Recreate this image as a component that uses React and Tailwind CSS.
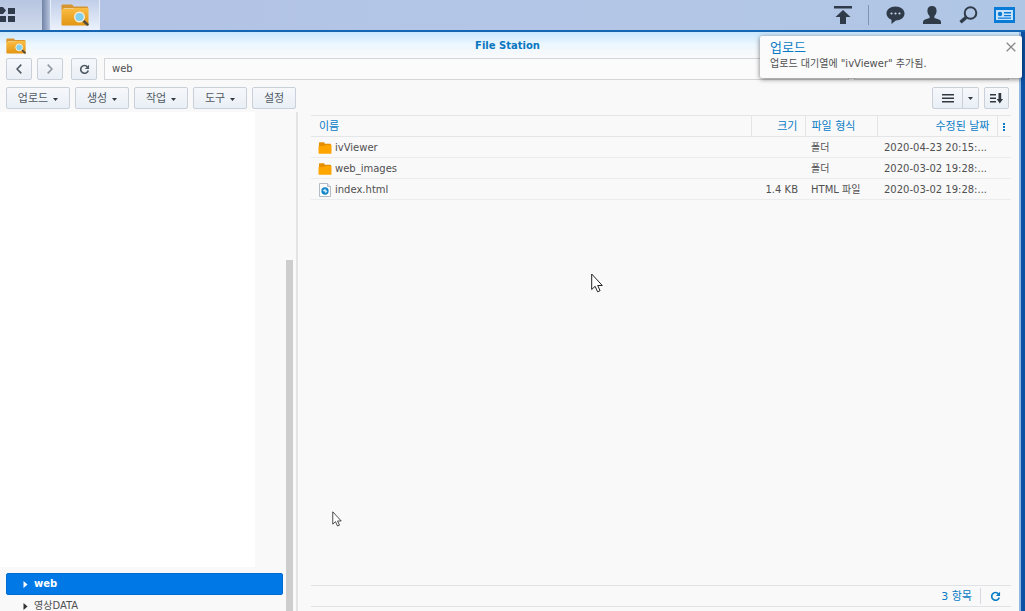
import React from "react";

const files = [
  { name: "ivViewer", kind: "folder", size: "", type: "폴더", date: "2020-04-23 20:15:..." },
  { name: "web_images", kind: "folder", size: "", type: "폴더", date: "2020-03-02 19:28:..." },
  { name: "index.html", kind: "html", size: "1.4 KB", type: "HTML 파일", date: "2020-03-02 19:28:..." },
];

const menus = [
  { label: "업로드", width: "w-16" },
  { label: "생성", width: "w-[54px]" },
  { label: "작업", width: "w-[54px]" },
  { label: "도구", width: "w-[54px]" },
];

const buttonStyle =
  "flex h-[22px] shrink-0 items-center justify-center rounded-[2px] border border-[#c9d0d9] bg-linear-to-b from-[#f6f8fb] to-[#e9eff6] text-[#505a64]";

function StationIcon({ className }) {
  return (
    <svg className={className} viewBox="0 0 28 22" aria-hidden="true">
      <defs>
        <linearGradient id="folderFace" x1="0" y1="0" x2="0" y2="1">
          <stop offset="0" stopColor="#fbbd45" />
          <stop offset="1" stopColor="#e29512" />
        </linearGradient>
      </defs>
      <path d="M.5 3V1.500Q.5.500 1.500.500h9q1 0 1.500 1l.5 1h13.500q1 0 1 1v3H.5z" fill="#d79530" />
      <path d="M2.500 4h23v3h-23z" fill="#efcf90" />
      <path d="M.5 5h11l2-1h14v16.500q0 1-1 1h-25q-1 0-1-1z" fill="url(#folderFace)" />
      <path d="M22 16.500l4.500 4" stroke="#514a3d" strokeWidth="2.500" strokeLinecap="round" />
      <circle cx="18.500" cy="13" r="4.800" fill="#83cfee" stroke="#f3edda" strokeWidth="1.400" />
    </svg>
  );
}

function FolderIcon() {
  return (
    <svg className="h-3 w-[14px] shrink-0" viewBox="0 0 14 12" aria-hidden="true">
      <path d="M1 3V1q0-.7.7-.7H6l1 1.400h5.300q.7 0 .7.700V4H1z" fill="#e48e00" />
      <path d="M.5 4h5.700l1-.9h6.300V11q0 .7-.7.700H1.200Q.5 11.700.5 11z" fill="#ffa500" />
    </svg>
  );
}

function HtmlIcon() {
  return (
    <svg className="h-[14px] w-[14px] shrink-0" viewBox="0 0 14 14" aria-hidden="true">
      <path d="M1.500.5h8l3 3v10h-11z" fill="#fff" stroke="#b3bcc4" />
      <path d="M9.500.5v3h3" fill="#e5e9ed" stroke="#b3bcc4" />
      <circle cx="7" cy="8" r="3.700" fill="#1786c9" />
      <path d="M4.500 8l2.800-2.500.4 1.700 1.700.7-1.700 2.400-.9-1.800z" fill="#d3efff" />
    </svg>
  );
}

function RefreshIcon({ className }) {
  return (
    <svg className={className} viewBox="0 0 12 12" aria-hidden="true">
      <path d="M9.200 3.100A4.200 4.200 0 1 0 10.100 7" fill="none" stroke="currentColor" strokeWidth="1.800" />
      <path d="M11 .8v4.700H6.300z" fill="currentColor" />
    </svg>
  );
}

function Caret() {
  return (
    <svg className="h-[3px] w-[5px]" viewBox="0 0 5 3" aria-hidden="true">
      <path d="M0 0h5L2.500 3z" fill="#303840" />
    </svg>
  );
}

function Chevron({ back }) {
  return (
    <svg className="h-[10px] w-[6px]" viewBox="0 0 6 10" aria-hidden="true">
      <path d={back ? "M5.300.6L1 5l4.300 4.400" : "M.7.600L5 5 .7 9.400"} fill="none" stroke="currentColor" strokeWidth="1.600" />
    </svg>
  );
}

function Pointer({ className }) {
  return (
    <svg className={className} viewBox="0 0 12 20" aria-hidden="true">
      <path d="M.7 1v15.500l3.400-3.200 2.500 5.500 2.500-1.100-2.400-5.200h4.600z" fill="#fff" stroke="#222" strokeWidth="1" />
    </svg>
  );
}

function TreeRow({ label, selected }) {
  return (
    <button
      type="button"
      className={
        selected
          ? "flex h-[22px] w-full items-center gap-[6px] rounded-[2px] border border-[#006bd0] bg-[#0079e6] pl-4 text-left font-bold text-white"
          : "flex h-[22px] w-full items-center gap-[6px] border border-transparent pl-4 text-left text-[#505050]"
      }
    >
      <svg className="h-[7px] w-[5px]" viewBox="0 0 5 7" aria-hidden="true">
        <path d="M.5 0v7l4-3.500z" fill={selected ? "#fff" : "#333"} />
      </svg>
      {label}
    </button>
  );
}

function Taskbar() {
  return (
    <header className="flex h-8 shrink-0 items-stretch border-b-2 border-[#1466b3] bg-linear-to-r from-[#b1c2e5] via-[#b4c6e7] to-[#b0c6e5]">
      <button type="button" aria-label="메인 메뉴" className="flex w-[42px] items-center bg-linear-to-b from-[#b6c5e1] to-[#d0daec]">
        <svg className="h-4 w-4" viewBox="0 0 16 16" aria-hidden="true">
          <path d="M0 0h3l3 3.500L3 7H0zM8 1h7v6H8zM0 9h6v6H0zM8 9h7v6H8z" fill="#303b4c" />
        </svg>
      </button>
      <span className="w-2 bg-linear-to-r from-[#7183a5] to-[#b9c6df]" />
      <button type="button" aria-label="File Station" className="flex w-[50px] items-center justify-center border-x border-[#e5edf8] bg-linear-to-b from-[#c0cee8] to-[#ecf2fc]">
        <StationIcon className="h-[22px] w-7" />
      </button>
      <div className="ml-auto flex items-center pr-[10px] text-[#303b49]">
        <button type="button" aria-label="업로드 대기열">
          <svg className="h-[18px] w-5" viewBox="0 0 20 18" aria-hidden="true">
            <path d="M1 0h18v2.500H1zM10 4l7.500 7H13v7H7v-7H2.500z" fill="currentColor" />
          </svg>
        </button>
        <span className="ml-[15px] mr-[17px] h-5 w-px bg-[#8093b5]" />
        <button type="button" aria-label="채팅">
          <svg className="h-[18px] w-[19px]" viewBox="0 0 19 18" aria-hidden="true">
            <path d="M9.500.5C4.300.5.500 3.500.500 7.500c0 2.900 2 5.300 5 6.300V18l4.300-3.500c5-.1 8.700-3.100 8.700-7S14.700.5 9.500.5z" fill="currentColor" />
            <g fill="#c6d5ed"><circle cx="5.500" cy="7.500" r="1.100" /><circle cx="9.500" cy="7.500" r="1.100" /><circle cx="13.500" cy="7.500" r="1.100" /></g>
          </svg>
        </button>
        <button type="button" aria-label="개인" className="ml-[17px]">
          <svg className="h-[18px] w-5" viewBox="0 0 20 18" aria-hidden="true">
            <path d="M10 0C7 0 5.400 1.800 5.400 4.700c0 2.500 1 4.200 2.200 5.300v2L3 13.500Q1 14.300 1 16v2h18v-2q0-1.700-2-2.500L12.400 12v-2c1.200-1.100 2.200-2.800 2.200-5.300C14.600 1.800 13 0 10 0z" fill="currentColor" />
          </svg>
        </button>
        <button type="button" aria-label="검색" className="ml-[17px]">
          <svg className="h-[18px] w-[19px]" viewBox="0 0 19 18" aria-hidden="true">
            <circle cx="11.500" cy="7" r="5.800" fill="none" stroke="currentColor" strokeWidth="2" />
            <path d="M7 11.500L1.500 16.300" stroke="currentColor" strokeWidth="3.500" />
          </svg>
        </button>
        <button type="button" aria-label="위젯" className="ml-4">
          <svg className="h-4 w-[21px]" viewBox="0 0 21 16" aria-hidden="true">
            <path d="M0 0h21v16H0z" fill="#087bd7" />
            <path d="M2 3h17v10H2z" fill="#c7e3fc" />
            <circle cx="6" cy="7" r="2.200" fill="#087bd7" />
            <path d="M10 5h7v1.500h-7zM10 8h7v1.200h-7zM4 10.500h13v1.200H4z" fill="#087bd7" />
          </svg>
        </button>
      </div>
    </header>
  );
}

export default function App() {
  return (
    <div className="relative flex h-screen flex-col overflow-hidden bg-[#0d51a5] font-['DejaVu_Sans','Noto_Sans_CJK_KR',sans-serif] text-[10px] leading-4 text-[#505050]">
      <Taskbar />
      <main className="mr-1 flex min-h-0 flex-1 flex-col border-r-2 border-[#8fb9e2] bg-[#f9f9fa]">
        <div className="grid h-[26px] shrink-0 grid-cols-[1fr_auto_1fr] items-center bg-linear-to-b from-[#c8e7fe] via-[#edf7ff] to-[#fafafa] pl-[6px] pr-[10px] pt-px">
          <StationIcon className="h-4 w-5" />
          <h1 className="font-bold text-[#0876bf]">File Station</h1>
        </div>

        <div className="flex h-[22px] shrink-0 gap-[5px] pl-[6px] pr-[10px]">
          <button type="button" aria-label="뒤로" className={`${buttonStyle} w-[26px]`}><Chevron back /></button>
          <button type="button" aria-label="앞으로" className={`${buttonStyle} w-[26px]`}><span className="opacity-60"><Chevron /></span></button>
          <button type="button" aria-label="새로 고침" className={`${buttonStyle} ml-[3px] w-[26px] text-[#252c34]`}><RefreshIcon className="h-[11px] w-[11px]" /></button>
          <input aria-label="경로" defaultValue="web" className="ml-[2px] min-w-0 flex-1 border border-[#d4d5d9] bg-[#fbfbfb] px-[7px] text-[10px] outline-none" />
          <input aria-label="파일 검색" className="w-[155px] border border-[#d4d5d9] bg-[#fbfbfb] px-2 outline-none" />
        </div>

        <div className="mt-[7px] flex h-[22px] shrink-0 gap-[5px] pl-[6px] pr-[10px]">
          {menus.map((menu) => (
            <button key={menu.label} type="button" className={`${buttonStyle} ${menu.width} gap-[5px] pt-[2px] text-[11px]`}>
              {menu.label}<Caret />
            </button>
          ))}
          <button type="button" className={`${buttonStyle} w-11 pt-[2px] text-[11px]`}>설정</button>
          <div className="ml-auto flex">
            <button type="button" aria-label="목록 보기" className={`${buttonStyle} w-[31px] rounded-r-none`}>
              <svg className="h-[9px] w-3" viewBox="0 0 12 9" aria-hidden="true"><path d="M0 0h12v1.500H0zM0 3.500h12V5H0zM0 7h12v1.500H0z" fill="#303840" /></svg>
            </button>
            <button type="button" aria-label="보기 선택" className={`${buttonStyle} w-4 rounded-l-none border-l-0`}><Caret /></button>
          </div>
          <button type="button" aria-label="정렬" className={`${buttonStyle} w-[25px]`}>
            <svg className="h-[11px] w-[13px]" viewBox="0 0 13 11" aria-hidden="true"><path d="M0 1h6v1.500H0zM0 4.500h6V6H0zM0 8h6v1.500H0zM8.500 0h2.700v6H13l-3.200 4.500L6.700 6h1.800z" fill="#303840" /></svg>
          </button>
        </div>

        <div className="mt-[3px] flex min-h-0 flex-1">
          <aside className="flex w-[298px] shrink-0 border-r-2 border-[#e3e4e6]">
            <div className="flex w-[286px] flex-col">
              <div className="mr-[31px] min-h-0 flex-1 bg-white" />
              <nav aria-label="폴더" className="-mb-[6px] shrink-0 pl-[6px] pr-[3px] pt-[6px]">
                <TreeRow label="web" selected />
                <TreeRow label="영상DATA" />
              </nav>
            </div>
            <div className="flex w-[7px] flex-col justify-end">
              <div className="h-[70.4%] bg-[#cdcdcd]" />
            </div>
          </aside>

          <section aria-label="파일 목록" className="ml-[13px] mr-2 flex min-w-0 flex-1 flex-col pt-[3px]">
            <table className="w-full table-fixed border-collapse">
              <colgroup>
                <col />
                <col className="w-[54px]" />
                <col className="w-[72px]" />
                <col className="w-[120px]" />
                <col className="w-[14px]" />
              </colgroup>
              <thead>
                <tr className="h-[21px] border-y border-[#e4e5e7] text-[11px] text-[#087bc5] [&>th]:p-0 [&>th]:pt-[2px] [&>th]:font-normal">
                  <th><span className="block pl-2 text-left">이름</span></th>
                  <th className="border-l border-[#e4e5e7]"><span className="block pr-[7px] text-right">크기</span></th>
                  <th className="border-l border-[#e4e5e7]"><span className="block pl-[6px] text-left">파일 형식</span></th>
                  <th className="border-l border-[#e4e5e7]"><span className="block pr-[7px] text-right">수정된 날짜</span></th>
                  <th className="border-l border-[#e4e5e7]">
                    <button type="button" aria-label="열 선택" className="flex w-full justify-center">
                      <svg className="h-2 w-[2px]" viewBox="0 0 2 8" aria-hidden="true"><path d="M0 0h2v2H0zM0 3h2v2H0zM0 6h2v2H0z" fill="#087bc5" /></svg>
                    </button>
                  </th>
                </tr>
              </thead>
              <tbody>
                {files.map((file) => (
                  <tr key={file.name} className="h-[21px] border-b border-[#ebecee] whitespace-nowrap [&>td]:p-0 [&>td]:pt-[2px]">
                    <td>
                      <span className="flex items-center gap-[3px] pl-[7px]">
                        {file.kind === "folder" ? <FolderIcon /> : <HtmlIcon />}
                        {file.name}
                      </span>
                    </td>
                    <td><span className="block pr-[7px] text-right">{file.size}</span></td>
                    <td><span className="block pl-[6px]">{file.type}</span></td>
                    <td><span className="block pl-[7px]">{file.date}</span></td>
                    <td />
                  </tr>
                ))}
              </tbody>
            </table>
            <div className="mb-1 mt-auto flex h-[22px] items-center justify-end border-y border-[#e0e2e5] pr-[10px] text-[11px] text-[#087bc5]">
              <span className="pt-px">3 항목</span>
              <span className="ml-2 mr-[9px] h-4 w-px bg-[#d5d8dc]" />
              <button type="button" aria-label="목록 새로 고침"><RefreshIcon className="h-[11px] w-[11px]" /></button>
            </div>
          </section>
        </div>
      </main>

      <div role="status" className="absolute right-[3px] top-9 h-[42px] w-[262px] rounded-[2px] bg-[#fbfbfc] pl-[10px] pt-1 shadow-[0_1px_5px_rgba(0,0,0,0.55)]">
        <h2 className="text-[13px] leading-4 text-[#087bc5]">업로드</h2>
        <p>업로드 대기열에 "ivViewer" 추가됨.</p>
        <button type="button" aria-label="닫기" className="absolute right-[6px] top-[6px]">
          <svg className="h-[10px] w-[10px]" viewBox="0 0 10 10" aria-hidden="true"><path d="M.7.700l8.600 8.600M9.300.700L.7 9.300" stroke="#888" strokeWidth="1.300" /></svg>
        </button>
      </div>

      <Pointer className="pointer-events-none absolute left-[591px] top-[273px] h-5 w-3" />
      <Pointer className="pointer-events-none absolute left-[332px] top-[511px] h-4 w-[10px]" />
    </div>
  );
}
